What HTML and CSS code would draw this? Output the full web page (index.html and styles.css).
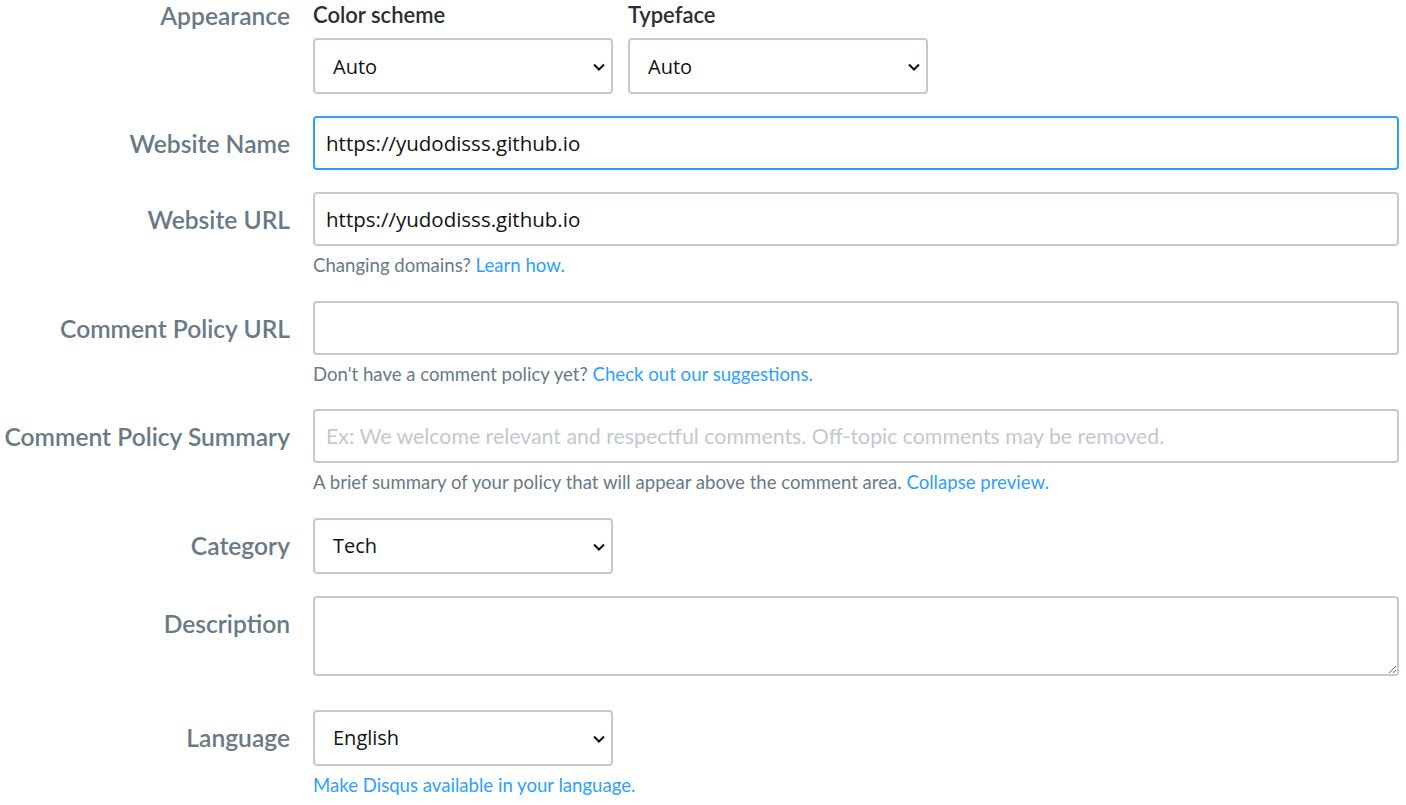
FILE: index.html
```html
<!DOCTYPE html>
<html lang="en">
<head>
<meta charset="utf-8">
<title>Settings</title>
<link rel="stylesheet" href="styles.css">
</head>
<body>
<form class="settings">
  <div class="row row-appearance">
    <div class="label label-top">Appearance</div>
    <div class="field field-pair">
      <div class="sub">
        <div class="sublabel">Color scheme</div>
        <div class="select-wrap">
          <select class="select"><option>Auto</option></select>
          <svg class="chevron" width="12" height="8" viewBox="0 0 12 8"><path d="M1 1.5 L6 6.5 L11 1.5" fill="none" stroke="#111" stroke-width="2"/></svg>
        </div>
      </div>
      <div class="sub">
        <div class="sublabel">Typeface</div>
        <div class="select-wrap">
          <select class="select"><option>Auto</option></select>
          <svg class="chevron" width="12" height="8" viewBox="0 0 12 8"><path d="M1 1.5 L6 6.5 L11 1.5" fill="none" stroke="#111" stroke-width="2"/></svg>
        </div>
      </div>
    </div>
  </div>

  <div class="row">
    <label class="label">Website Name</label>
    <div class="field">
      <input class="input focused" type="text" value="https://yudodisss.github.io">
    </div>
  </div>

  <div class="row">
    <label class="label">Website URL</label>
    <div class="field">
      <input class="input" type="text" value="https://yudodisss.github.io">
      <p class="help">Changing domains? <a href="#">Learn how.</a></p>
    </div>
  </div>

  <div class="row">
    <label class="label">Comment Policy URL</label>
    <div class="field">
      <input class="input" type="text" value="">
      <p class="help">Don't have a comment policy yet? <a href="#">Check out our suggestions.</a></p>
    </div>
  </div>

  <div class="row">
    <label class="label">Comment Policy Summary</label>
    <div class="field">
      <input class="input" type="text" placeholder="Ex: We welcome relevant and respectful comments. Off-topic comments may be removed.">
      <p class="help">A brief summary of your policy that will appear above the comment area. <a href="#">Collapse preview.</a></p>
    </div>
  </div>

  <div class="row">
    <label class="label">Category</label>
    <div class="field">
      <div class="select-wrap">
        <select class="select"><option>Tech</option></select>
        <svg class="chevron" width="12" height="8" viewBox="0 0 12 8"><path d="M1 1.5 L6 6.5 L11 1.5" fill="none" stroke="#111" stroke-width="2"/></svg>
      </div>
    </div>
  </div>

  <div class="row">
    <label class="label">Description</label>
    <div class="field">
      <textarea class="textarea"></textarea>
    </div>
  </div>

  <div class="row row-lang">
    <label class="label">Language</label>
    <div class="field">
      <div class="select-wrap">
        <select class="select"><option>English</option></select>
        <svg class="chevron" width="12" height="8" viewBox="0 0 12 8"><path d="M1 1.5 L6 6.5 L11 1.5" fill="none" stroke="#111" stroke-width="2"/></svg>
      </div>
      <p class="help"><a href="#">Make Disqus available in your language.</a></p>
    </div>
  </div>
</form>
</body>
</html>
```

FILE: styles.css
```css
html, body {
  margin: 0;
  padding: 0;
  background: #ffffff;
}

body {
  font-family: "Source Sans Pro", "Lato", "Noto Sans", sans-serif;
  color: #2a2e2e;
  overflow: hidden;
}

.settings {
  display: flex;
  flex-direction: column;
  gap: 22px;
  width: 1399px;
}

.row {
  display: flex;
  align-items: flex-start;
  gap: 23px;
}

.row-lang {
  margin-top: 12px;
}

.label {
  width: 290px;
  flex: none;
  text-align: right;
  font-size: 24.6px;
  font-weight: 600;
  line-height: 32px;
  padding-top: 12px;
  color: #687a86;
  white-space: nowrap;
}

.label-top {
  padding-top: 0;
}

.field {
  flex: 1;
  display: flex;
  flex-direction: column;
  align-items: flex-start;
}

.field-pair {
  flex-direction: row;
  gap: 15px;
}

.sub {
  display: flex;
  flex-direction: column;
}

.sublabel {
  font-size: 22px;
  font-weight: 600;
  line-height: 30px;
  color: #2a2e2e;
  margin-bottom: 8px;
}

.select-wrap {
  position: relative;
  width: 300px;
  height: 56px;
}

.select {
  appearance: none;
  -webkit-appearance: none;
  width: 300px;
  height: 56px;
  box-sizing: border-box;
  border: 2px solid #c5c9d2;
  border-radius: 4px;
  background: #ffffff;
  padding: 0 36px 0 18px;
  font-family: "Open Sans", "Noto Sans", sans-serif;
  font-size: 20px;
  color: #111111;
  display: block;
}

.chevron {
  position: absolute;
  right: 8px;
  top: 25px;
  pointer-events: none;
}

.input {
  width: 100%;
  height: 54px;
  box-sizing: border-box;
  border: 2px solid #c5c9d2;
  border-radius: 4px;
  background: #ffffff;
  padding: 0 11px;
  font-family: "Open Sans", "Noto Sans", sans-serif;
  font-size: 20.5px;
  color: #111111;
  outline: none;
  display: block;
}

.input.focused {
  border-color: #2e9fff;
}

.input::placeholder {
  font-family: "Source Sans Pro", "Lato", sans-serif;
  color: #c3c8d1;
  font-size: 21.3px;
}

.textarea {
  width: 100%;
  height: 80px;
  box-sizing: border-box;
  border: 2px solid #c5c9d2;
  border-radius: 4px;
  background: #ffffff;
  padding: 10px 11px;
  font-family: "Open Sans", "Noto Sans", sans-serif;
  font-size: 20px;
  resize: both;
  display: block;
}

.help {
  margin: 7px 0 1.5px;
  font-size: 18.6px;
  line-height: 24px;
  color: #687a86;
  white-space: nowrap;
}

.help a {
  color: #2e9fff;
  text-decoration: none;
}
```
